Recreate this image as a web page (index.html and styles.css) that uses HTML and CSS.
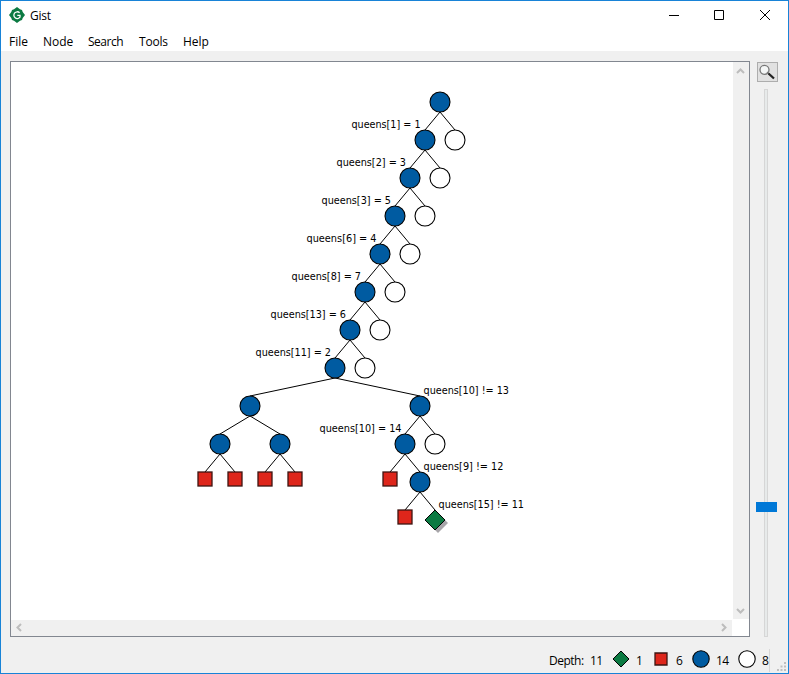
FILE: index.html
```html
<!DOCTYPE html>
<html lang="en">
<head>
<meta charset="utf-8">
<title>Gist</title>
<link rel="stylesheet" href="styles.css">
</head>
<body>
<div class="window">
  <header class="titlebar">
    <svg class="logo" width="16" height="16" viewBox="0 0 16 16"><path d="M8 0l3 2.300 2 .700.700 2L16 8l-2.300 3-.700 2-2 .700L8 16l-3-2.300-2-.700-.700-2L0 8l2.300-3 .700-2 2-.700z" fill="#0b7a42"/><path d="M10.600 5.700A3.400 3.400 0 1 0 11 10.200V8.400H8.300" fill="none" stroke="#fff" stroke-width="1.300"/></svg>
    <span class="title">Gist</span>
    <div class="controls">
      <svg width="46" height="29"><path d="M18 14.500h10" class="ctl"/></svg>
      <svg width="46" height="29"><path d="M17.500 9.500h9v9h-9z" class="ctl"/></svg>
      <svg width="46" height="29"><path d="M17 9l10 10M27 9L17 19" class="ctl"/></svg>
    </div>
  </header>
  <nav class="menu"><span>File</span><span>Node</span><span>Search</span><span>Tools</span><span>Help</span></nav>
  <main class="content">
    <section class="view">
      <svg id="tree" class="canvas" viewBox="11 62 722 558"></svg>
      <div class="vbar">
        <svg width="16" height="17"><path d="M4 11 7.500 7.500 11 11" class="arrow"/></svg>
        <svg width="16" height="17"><path d="M4 7 7.500 10.500 11 7" class="arrow"/></svg>
      </div>
      <div class="hbar">
        <svg width="17" height="16"><path d="M10 4 6.500 7.500 10 11" class="arrow"/></svg>
        <svg width="17" height="16"><path d="M7 4 10.500 7.500 7 11" class="arrow"/></svg>
      </div>
    </section>
    <aside class="side">
      <div class="zoom-btn"><svg width="19" height="18" viewBox="0 0 19 18"><circle cx="6.500" cy="6.800" r="4.500" fill="#f4f6f6" stroke="#777" stroke-width="1.300"/><path d="M9 9l2 2" stroke="#777" stroke-width="1.500"/><path d="M10.500 10.500l5.500 5" stroke="#222" stroke-width="2.300"/></svg></div>
      <div class="slider"><div class="thumb"></div></div>
    </aside>
  </main>
  <footer class="status">
    <span class="depth">Depth:</span><span class="n11">11</span>
    <svg class="s-diamond" width="18" height="18"><path d="M9 1l8 8-8 8-8-8z" class="solved"/></svg><span class="n1">1</span>
    <svg class="s-square" width="14" height="14"><path d="M1 1h12v12H1z" class="failed"/></svg><span class="n6">6</span>
    <svg class="s-blue" width="18" height="18"><circle cx="9" cy="9" r="8.200" class="choice"/></svg><span class="n14">14</span>
    <svg class="s-open" width="18" height="18"><circle cx="9" cy="9" r="8.200" class="open"/></svg><span class="n8">8</span>
    <i class="sep"></i>
    <svg class="grip" width="10" height="10"><path d="M7 0h2v2H7zM3.500 3.500h2v2h-2zM7 3.500h2v2H7zM0 7h2v2H0zM3.500 7h2v2h-2zM7 7h2v2H7z" fill="#bfbfbf"/></svg>
  </footer>
</div>
<script src="tree.js"></script>
</body>
</html>
```
FILE: styles.css
```css
* { box-sizing: border-box; }
body { margin: 0; font: 12px "Open Sans", "Noto Sans", sans-serif; color: #000; }
svg { display: block; flex: none; }
.window { width: 789px; height: 674px; border: 1px solid #1883d7; background: #f0f0f0; display: flex; flex-direction: column; overflow: hidden; }
.titlebar { height: 30px; background: #fff; display: flex; align-items: flex-start; padding-left: 8px; }
.logo { margin-top: 6px; }
.title { margin-left: 5px; line-height: 30px; letter-spacing: -0.25px; }
.controls { margin: 0 -1px 0 auto; display: flex; }
.ctl { fill: none; stroke: #000; stroke-width: 1; }
.menu { height: 20px; background: #fff; display: flex; gap: 16px; padding-left: 8px; line-height: 22px; }
.menu span:nth-child(1) { width: 18px; }
.menu span:nth-child(2) { width: 29px; }
.menu span:nth-child(3) { width: 35px; letter-spacing: -0.5px; }
.menu span:nth-child(4) { width: 28px; letter-spacing: -0.2px; }
.content { display: flex; height: 576px; margin: 10px 0 0 9px; }
.view { width: 740px; height: 576px; background: #fff; border: 1px solid #828790; display: grid; grid-template: 558px 16px / 722px 16px; }
.canvas { width: 722px; height: 558px; font: 11px "DejaVu Sans Condensed", "DejaVu Sans", sans-serif; }
.vbar, .hbar { background: #f0f0f0; display: flex; justify-content: space-between; }
.vbar { flex-direction: column; height: 557px; }
.hbar { width: 721px; }
.arrow { fill: none; stroke: #bdbdbd; stroke-width: 2; }
.side { margin-left: 7px; width: 21px; display: flex; flex-direction: column; }
.zoom-btn { width: 21px; height: 20px; margin-top: 1px; border: 1px solid #adadad; background: #e1e1e1; }
.slider { width: 4px; height: 548px; margin: 7px 0 0 7px; padding-top: 412px; border: 1px solid #d6d6d6; background: #e7eaea; }
.thumb { width: 21px; height: 10px; margin-left: -9px; background: #0078d7; }
.status { display: flex; height: 26px; margin-top: 10px; padding-left: 548px; align-items: center; line-height: 24px; }
.status span { flex: none; white-space: nowrap; letter-spacing: -0.5px; padding-top: 1px; }
.status svg { margin-top: -3px; }
.depth { width: 41px; }
.n11 { width: 22px; }
.n1 { width: 12px; margin-left: 6px; }
.s-square { margin-left: 6px; }
.n6 { width: 8px; margin-left: 8px; }
.s-blue { margin-left: 8px; }
.n14 { width: 14px; margin-left: 6px; }
.s-open { margin-left: 8px; }
.n8 { width: 7px; margin-left: 6px; }
.sep { flex: none; width: 1px; height: 23px; background: #d7d7d7; }
.status .grip { margin: 14px 0 0 7px; }
.edge { stroke: #000; stroke-width: 1; }
.choice { fill: #005ba1; stroke: #000; stroke-width: 1.1; }
.open { fill: #fff; stroke: #000; stroke-width: 1.1; }
.failed { fill: #de261b; stroke: #3d1512; stroke-width: 1.3; }
.solved { fill: #0b7a42; stroke: #000; }
.shadow { fill: #a7a5a9; }
```
FILE: tree.js
```js
// x, y, kind, parent index, label, label x, label width
const nodes = [
  [440, 102, 'choice', -1],
  [425, 140, 'choice', 0, 'queens[1] = 1', 351.5, 69],
  [455, 140, 'open', 0],
  [410, 178, 'choice', 1, 'queens[2] = 3', 336.5, 69.5],
  [440, 178, 'open', 1],
  [395, 216, 'choice', 3, 'queens[3] = 5', 321.5, 69.5],
  [425, 216, 'open', 3],
  [380, 254, 'choice', 5, 'queens[6] = 4', 306.5, 70],
  [410, 254, 'open', 5],
  [365, 292, 'choice', 7, 'queens[8] = 7', 291.5, 69.5],
  [395, 292, 'open', 7],
  [350, 330, 'choice', 9, 'queens[13] = 6', 270.5, 75.5],
  [380, 330, 'open', 9],
  [335, 368, 'choice', 11, 'queens[11] = 2', 255.5, 75.5],
  [365, 368, 'open', 11],
  [250, 406, 'choice', 13],
  [420, 406, 'choice', 13, 'queens[10] != 13', 423.5, 85.5],
  [220, 444, 'choice', 15],
  [280, 444, 'choice', 15],
  [205, 482, 'failed', 17],
  [235, 482, 'failed', 17],
  [265, 482, 'failed', 18],
  [295, 482, 'failed', 18],
  [405, 444, 'choice', 16, 'queens[10] = 14', 319.5, 82],
  [435, 444, 'open', 16],
  [390, 482, 'failed', 23],
  [420, 482, 'choice', 23, 'queens[9] != 12', 423.5, 80],
  [405, 520, 'failed', 26],
  [435, 520, 'solved', 26, 'queens[15] != 11', 438.5, 85.5]
];
const svg = document.getElementById('tree');
function add(tag, attrs, text) {
  const el = document.createElementNS('http://www.w3.org/2000/svg', tag);
  for (const k in attrs) el.setAttribute(k, attrs[k]);
  if (text) el.textContent = text;
  svg.appendChild(el);
}
for (const [x, y, , p] of nodes) {
  if (p >= 0) add('line', { x1: nodes[p][0], y1: nodes[p][1] + 10, x2: x, y2: y - 10, class: 'edge' });
}
for (const [x, y, kind, , label, lx, lw] of nodes) {
  if (kind === 'failed') {
    add('rect', { x: x - 7, y: y - 10, width: 14, height: 14, class: kind });
  } else if (kind === 'solved') {
    add('path', { d: `M${x + 3} ${y - 7}l10 10-10 10-10-10z`, class: 'shadow' });
    add('path', { d: `M${x} ${y - 10}l10 10-10 10-10-10z`, class: kind });
  } else {
    add('circle', { cx: x, cy: y, r: 10, class: kind });
  }
  if (label) add('text', { x: lx, y: y - 12, textLength: lw, lengthAdjust: 'spacingAndGlyphs' }, label);
}
```
